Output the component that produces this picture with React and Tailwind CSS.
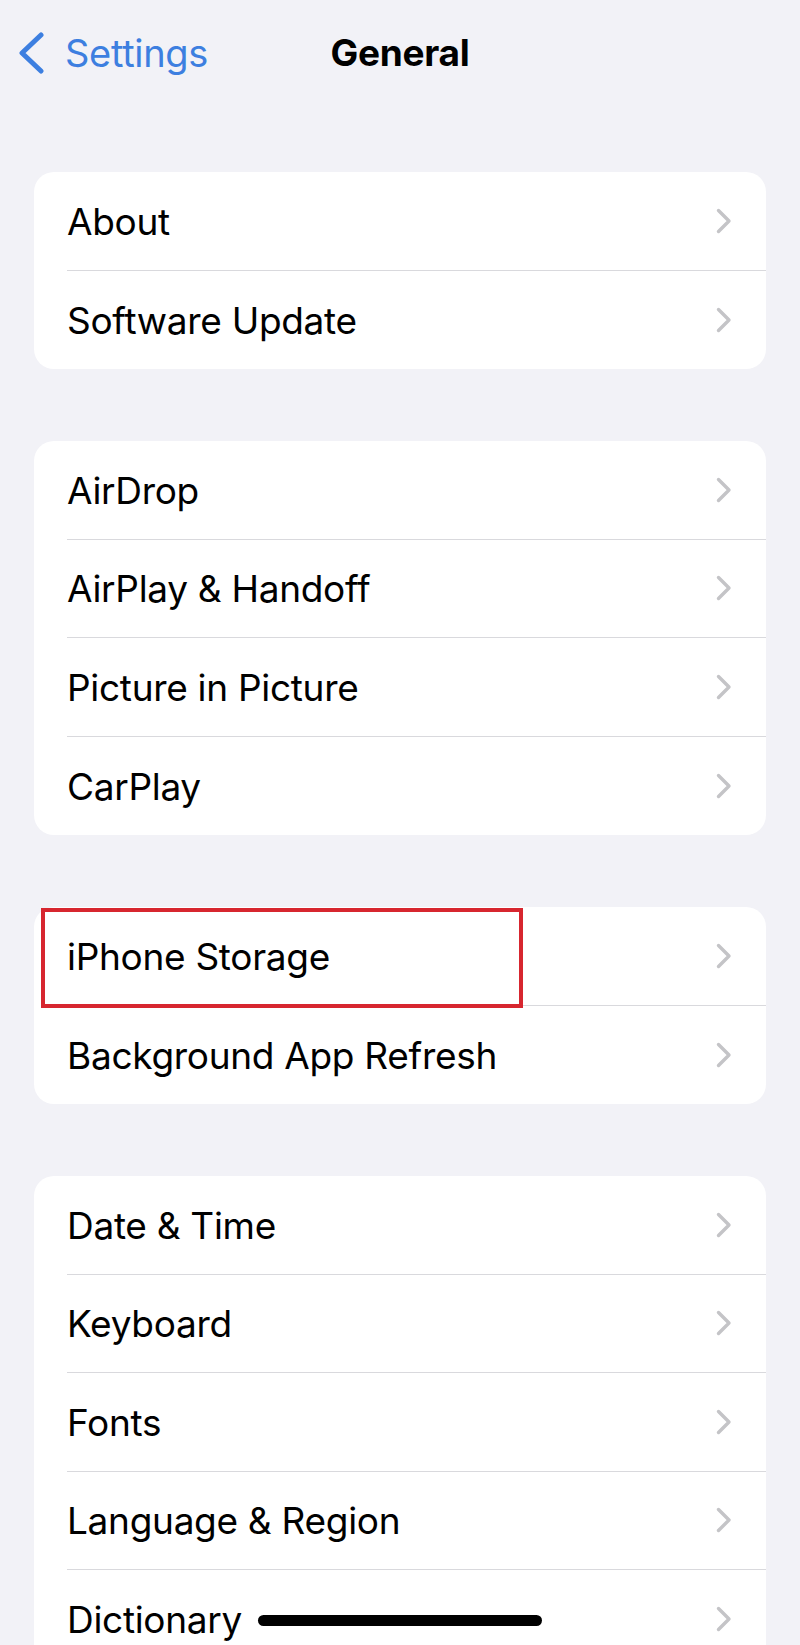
import { useState } from 'react'

const sections = [
  ['About', 'Software Update'],
  ['AirDrop', 'AirPlay & Handoff', 'Picture in Picture', 'CarPlay'],
  ['iPhone Storage', 'Background App Refresh'],
  ['Date & Time', 'Keyboard', 'Fonts', 'Language & Region', 'Dictionary'],
]

function Chevron() {
  return (
    <svg width="16" height="26" viewBox="0 0 16 26" fill="none" className="shrink-0">
      <polyline
        points="2.5,2.5 13,13 2.5,23.5"
        stroke="#c4c4c7"
        strokeWidth="3.4"
        strokeLinecap="round"
        strokeLinejoin="round"
      />
    </svg>
  )
}

function Row({ label, last, highlighted }) {
  return (
    <div className="relative pl-[33px]">
      {highlighted && (
        // red annotation box drawn over the row
        <div className="absolute left-[7px] top-[1px] w-[482px] h-[100px] border-[4px] border-[#d7262f] pointer-events-none" />
      )}
      <div
        className={
          'flex items-center justify-between h-[98.5px] pr-[34px] ' +
          (last ? '' : 'border-b-[1.5px] border-[#d9d9dd]')
        }
      >
        <span className="pt-[1px] text-[37px] leading-none text-black tracking-[-0.3px]">{label}</span>
        <Chevron />
      </div>
    </div>
  )
}

export default function App() {
  const [selected] = useState('iPhone Storage')

  return (
    <div
      className="relative h-[1645px] overflow-hidden bg-[#f2f2f7]"
      style={{ fontFamily: 'Inter, "Liberation Sans", sans-serif' }}
    >
      {/* Nav bar */}
      <header className="grid grid-cols-3 items-center h-[106px]">
        <div className="flex items-center gap-[20px] pl-[19px]">
          <svg width="26" height="42" viewBox="0 0 26 42" fill="none">
            <polyline
              points="22,3 3,21 22,39"
              stroke="#3d7fe0"
              strokeWidth="5"
              strokeLinecap="round"
              strokeLinejoin="round"
            />
          </svg>
          <span className="text-[38px] text-[#3d7fe0] tracking-[-0.3px]">Settings</span>
        </div>
        <h1 className="text-center text-[37px] font-bold text-black tracking-[-0.3px]">General</h1>
        <div />
      </header>

      <main className="flex flex-col gap-[72px] px-[34px] pt-[66px]">
        {sections.map((rows, i) => (
          <section key={i} className="bg-white rounded-[20px]">
            {rows.map((label, j) => (
              <Row
                key={label}
                label={label}
                last={j === rows.length - 1}
                highlighted={label === selected}
              />
            ))}
          </section>
        ))}
      </main>

      {/* home indicator */}
      <div className="absolute left-[258px] top-[1615px] w-[284px] h-[11px] rounded-full bg-black" />
    </div>
  )
}
